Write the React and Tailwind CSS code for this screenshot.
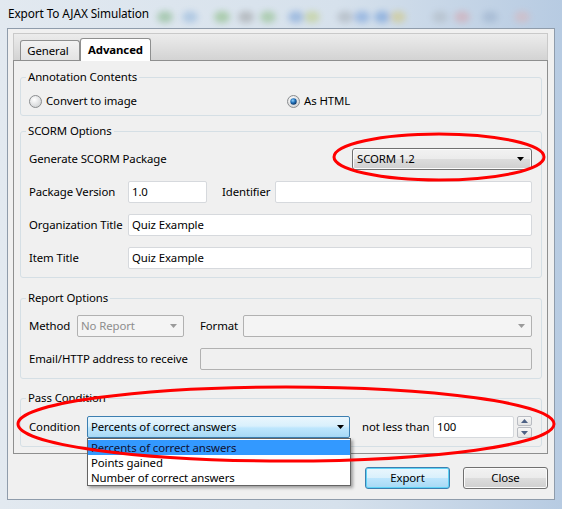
import React from 'react';

const Arrow = ({ color = '#000' }) => (
  <svg width="7" height="4" viewBox="0 0 7 4">
    <path d="M0 0h7L3.5 4z" fill={color} />
  </svg>
);

const Radio = ({ checked }) => (
  <svg width="13" height="13" viewBox="0 0 13 13">
    <defs>
      <radialGradient id={checked ? 'rOn' : 'rOff'} cx="0.4" cy="0.35" r="0.7">
        <stop offset="0" stopColor="#ffffff" />
        <stop offset="1" stopColor="#cfd1d3" />
      </radialGradient>
      <radialGradient id="dot" cx="0.4" cy="0.35" r="0.7">
        <stop offset="0" stopColor="#8fd2ff" />
        <stop offset="0.5" stopColor="#1f6fb8" />
        <stop offset="1" stopColor="#0b2f5c" />
      </radialGradient>
    </defs>
    <circle cx="6.5" cy="6.5" r="6" fill={checked ? 'url(#rOn)' : 'url(#rOff)'} stroke="#8b8d8f" />
    {checked && <circle cx="6.5" cy="6.5" r="3.2" fill="url(#dot)" />}
  </svg>
);

// blurred desktop showing through the glass title bar
const blobs = [
  [165, '#6aa86a'], [190, '#7fa9d6'], [222, '#6fae5f'], [246, '#8d8d8d'], [268, '#79b36a'],
  [296, '#5f8fd0'], [312, '#b8c86a'], [345, '#9aa0a8'], [362, '#5d8fd6'], [382, '#4f86d2'],
  [398, '#d0c060'], [440, '#a9b0b8'], [462, '#d89aa0'], [490, '#8fa6c4'], [522, '#e0b0b0'],
];

function Group({ title, className = '', children }) {
  return (
    <fieldset className={`border border-[#d5dfe5] rounded-[3px] ${className}`}>
      <legend className="ml-[5px] px-[2px] h-[16px] leading-[16px]">{title}</legend>
      {children}
    </fieldset>
  );
}

const Field = ({ value, className = '' }) => (
  <div className={`h-[22px] bg-white border border-[#d6d9dd] rounded-[2px] flex items-center px-[3px] ${className}`}>
    {value}
  </div>
);

export default function App() {
  return (
    <div className="relative w-[562px] h-[509px] overflow-hidden whitespace-nowrap bg-[linear-gradient(90deg,#e2e9f0,#d6e1ec_60%,#b7cbe2)] font-['Segoe_UI','Noto_Sans',sans-serif] text-[11.4px] tracking-[-0.1px] leading-none text-black">
      {/* title bar */}
      <div className="relative h-[28px] flex items-center pl-[8px] pb-[1px] text-[11.8px]">
        <svg className="absolute inset-0" width="562" height="28" viewBox="0 0 562 28">
          <defs>
            <filter id="glass" x="-50%" y="-50%" width="200%" height="200%">
              <feGaussianBlur stdDeviation="3" />
            </filter>
          </defs>
          <g filter="url(#glass)" opacity="0.45">
            {blobs.map(([x, c]) => (
              <ellipse key={x} cx={x} cy="17" rx="8" ry="6" fill={c} />
            ))}
          </g>
        </svg>
        <span className="relative">Export To AJAX Simulation</span>
      </div>

      {/* client area */}
      <div className="mx-[7px] h-[472px] border border-[#8f9cab] bg-[#f0f0f0] flex flex-col pl-[5px] pr-[6px] pt-[4px] pb-[10px]">
        {/* tab header */}
        <div className="h-[27px] flex items-end pl-[6px] border-x border-t border-[#c9c9c9] bg-[linear-gradient(#ececec,#d3d3d3)]">
          <div className="h-[20px] w-[60px] flex items-center justify-center pr-[4px] rounded-t-[3px] border border-b-0 border-[#8e8f8f] bg-[linear-gradient(#f2f2f2,#e3e3e3)]">
            General
          </div>
          <div className="h-[23px] w-[71px] -mb-px flex items-center justify-center rounded-t-[3px] border border-b-0 border-[#8e8f8f] bg-white font-bold z-10">
            Advanced
          </div>
        </div>

        {/* tab panel */}
        <div className="h-[394px] border border-[#8e8f8f] bg-[#f0f0f0] pl-[6px] pr-[5px] pt-[8px] pb-[6px] flex flex-col">
          <Group title="Annotation Contents">
            <div className="pl-[8px] pt-[8px] pb-[6px] flex items-center h-[30px]">
              <div className="w-[258px] flex items-center gap-[4px]">
                <Radio />
                <span>Convert to image</span>
              </div>
              <div className="flex items-center gap-[4px]">
                <Radio checked />
                <span>As HTML</span>
              </div>
            </div>
          </Group>

          <Group title="SCORM Options" className="mt-[7px]">
            <div className="pl-[8px] pr-[9px] pt-[9px] pb-[8px] flex flex-col gap-[11px]">
              <div className="h-[22px] flex items-center">
                <span className="flex-1">Generate SCORM Package</span>
                <div className="w-[180px] h-[22px] flex items-center justify-between pl-[4px] pr-[7px] rounded-[3px] border border-[#707070] bg-[linear-gradient(#f2f2f2,#ebebeb_50%,#dddddd_50%,#cfcfcf)] shadow-[inset_0_0_0_1px_#fbfbfb]">
                  <span>SCORM 1.2</span>
                  <Arrow />
                </div>
              </div>
              <div className="h-[22px] flex items-center">
                <span className="w-[99px]">Package Version</span>
                <Field value="1.0" className="w-[79px]" />
                <span className="ml-[15px] w-[53px]">Identifier</span>
                <Field value="" className="flex-1" />
              </div>
              <div className="h-[22px] flex items-center">
                <span className="w-[99px]">Organization Title</span>
                <Field value="Quiz Example" className="flex-1" />
              </div>
              <div className="h-[22px] flex items-center">
                <span className="w-[99px]">Item Title</span>
                <Field value="Quiz Example" className="flex-1" />
              </div>
            </div>
          </Group>

          <Group title="Report Options" className="mt-[12px]">
            <div className="pl-[8px] pr-[9px] pt-[9px] pb-[8px] flex flex-col gap-[11px]">
              <div className="h-[22px] flex items-center">
                <span className="w-[48px]">Method</span>
                <div className="w-[107px] h-[22px] flex items-center justify-between pl-[3px] pr-[6px] rounded-[2px] border border-[#b1b1b1] bg-[#f4f4f4] text-[#8d8d8d]">
                  <span>No Report</span>
                  <Arrow color="#9a9a9a" />
                </div>
                <span className="ml-[16px] w-[43px]">Format</span>
                <div className="flex-1 h-[22px] flex items-center justify-end pr-[6px] rounded-[2px] border border-[#b1b1b1] bg-[#f4f4f4]">
                  <Arrow color="#9a9a9a" />
                </div>
              </div>
              <div className="h-[22px] flex items-center">
                <span className="w-[171px]">Email/HTTP address to receive</span>
                <div className="flex-1 h-[22px] rounded-[2px] border border-[#b1b1b1] bg-[#f0f0f0]" />
              </div>
            </div>
          </Group>

          <Group title="Pass Condition" className="mt-[11px]">
            <div className="pl-[8px] pr-[9px] pt-[10px] pb-[8px]">
              <div className="h-[22px] flex items-center">
                <span className="w-[58px]">Condition</span>
                <div className="relative w-[263px] h-[22px]">
                  <div className="h-full flex items-center justify-between pl-[3px] pr-[5px] rounded-[2px] border border-[#3c7fb1] bg-[linear-gradient(#eaf6fd,#d9f0fc_45%,#bee6fd_55%,#a7d9f5)]">
                    <span>Percents of correct answers</span>
                    <Arrow />
                  </div>
                  <div className="absolute left-0 top-full w-[264px] h-[48px] bg-white border border-[#646464] pt-[1px] leading-[15px] shadow-[2px_2px_3px_rgba(0,0,0,0.35)] z-20">
                    <div className="h-[15px] pl-[3px] bg-[#3399ff] text-[#101030]">Percents of correct answers</div>
                    <div className="h-[15px] pl-[3px]">Points gained</div>
                    <div className="h-[15px] pl-[3px]">Number of correct answers</div>
                  </div>
                </div>
                <span className="ml-[12px] w-[71px]">not less than</span>
                <Field value="100" className="w-[81px]" />
                <div className="ml-[3px] w-[15px] h-[22px] flex flex-col gap-[1px]">
                  <div className="h-[10px] flex items-center justify-center rounded-[2px] border border-[#b9bcc2] bg-[linear-gradient(#f7f7f7,#e4e4e4)]">
                    <svg width="7" height="4" viewBox="0 0 7 4"><path d="M0 4h7L3.5 0z" fill="#4d6185" /></svg>
                  </div>
                  <div className="h-[11px] flex items-center justify-center rounded-[2px] border border-[#b9bcc2] bg-[linear-gradient(#f7f7f7,#e4e4e4)]">
                    <Arrow color="#4d6185" />
                  </div>
                </div>
              </div>
            </div>
          </Group>
        </div>

        {/* buttons */}
        <div className="mt-[13px] flex justify-end gap-[13px]">
          <div className="w-[85px] h-[22px] flex items-center justify-center rounded-[3px] border border-[#3c7fb1] bg-[linear-gradient(#eaf6fd,#d9f0fc_50%,#bee6fd_50%,#a7d9f5)] shadow-[inset_0_0_0_1px_#5fd3f5]">
            Export
          </div>
          <div className="w-[85px] h-[22px] flex items-center justify-center rounded-[3px] border border-[#707070] bg-[linear-gradient(#f2f2f2,#ebebeb_50%,#dddddd_50%,#cfcfcf)] shadow-[inset_0_0_0_1px_#fbfbfb]">
            Close
          </div>
        </div>
      </div>

      {/* red annotation marks */}
      <svg className="absolute inset-0 pointer-events-none z-30" width="562" height="509" viewBox="0 0 562 509">
        <ellipse cx="439" cy="157" rx="105" ry="23" fill="none" stroke="#ff0000" strokeWidth="3" />
        <ellipse cx="286" cy="424" rx="268" ry="37" fill="none" stroke="#ff0000" strokeWidth="3" />
      </svg>
    </div>
  );
}
